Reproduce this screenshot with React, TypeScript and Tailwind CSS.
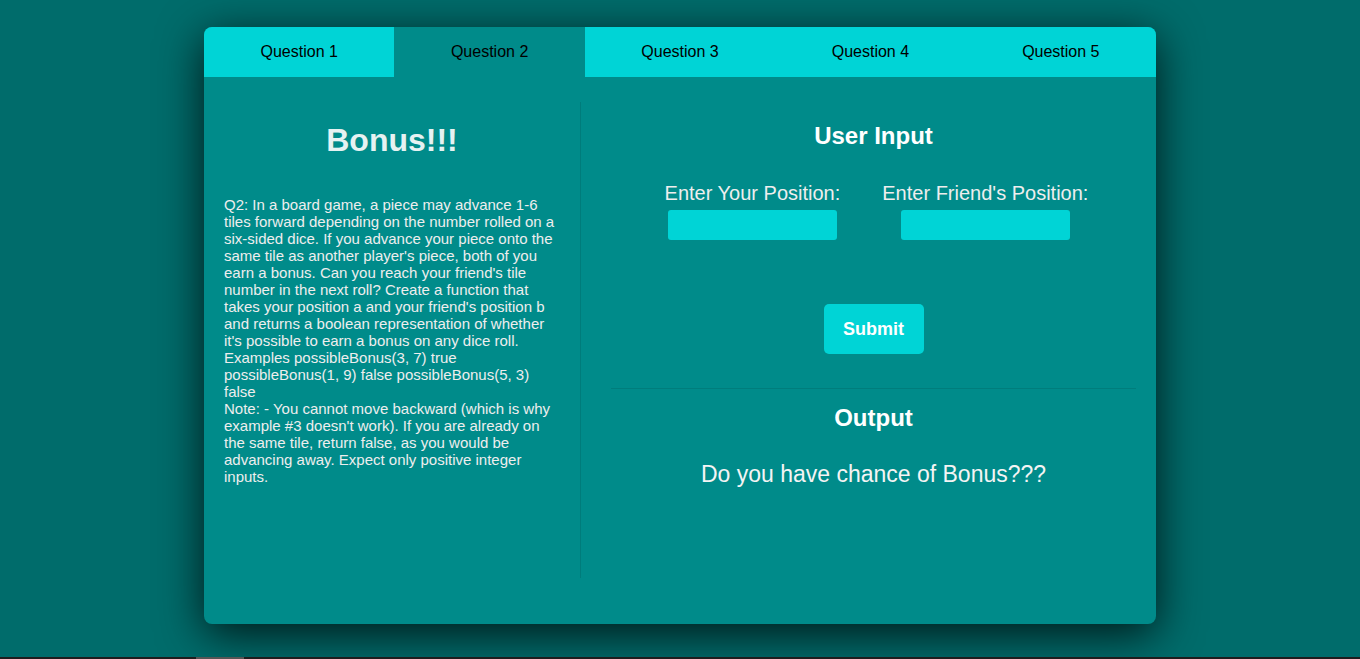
import React, { useState } from 'react';

const tabs = ['Question 1', 'Question 2', 'Question 3', 'Question 4', 'Question 5'];

export default function App() {
  const [active, setActive] = useState(1);
  const [a, setA] = useState('');
  const [b, setB] = useState('');

  return (
    <div className="font-['Liberation_Sans',Arial,sans-serif]">
      <div className="h-[657px] bg-[#006c6b] pt-[27px]">
        <div className="mx-auto w-[952px] h-[597px] bg-[#008b8a] rounded-lg overflow-hidden shadow-[0_10px_45px_rgba(0,0,0,0.8)]">
          {/* tabs */}
          <div className="flex h-[50px]">
            {tabs.map((t, i) => (
              <button
                key={t}
                onClick={() => setActive(i)}
                className={`flex-1 text-[16px] text-black ${i === active ? 'bg-[#008b8a]' : 'bg-[#00d4d6]'}`}
              >
                {t}
              </button>
            ))}
          </div>

          <div className="flex pt-[25px]">
            {/* question */}
            <div className="w-[377px] h-[476px] border-r border-[#007c7b] px-[20px] pt-[20px]">
              <h1 className="text-center text-[32px] font-bold text-[#e6f2f2] leading-[37px]">Bonus!!!</h1>
              <p className="mt-[37px] text-[15px] leading-[17px] text-[#eeeeee]">
                Q2: In a board game, a piece may advance 1-6 tiles forward depending on the number rolled on a
                six-sided dice. If you advance your piece onto the same tile as another player's piece, both of you
                earn a bonus. Can you reach your friend's tile number in the next roll? Create a function that takes
                your position a and your friend's position b and returns a boolean representation of whether it's
                possible to earn a bonus on any dice roll.
                <br />
                Examples possibleBonus(3, 7) true possibleBonus(1, 9) false possibleBonus(5, 3) false
                <br />
                Note: - You cannot move backward (which is why example #3 doesn't work). If you are already on the
                same tile, return false, as you would be advancing away. Expect only positive integer inputs.
              </p>
            </div>

            {/* user input + output */}
            <div className="flex-1 pl-[30px] pr-[20px] pt-[20px] text-center text-white">
              <h2 className="text-[24px] font-bold leading-[28px]">User Input</h2>
              <div className="mt-[32px] pl-[6px] flex justify-center gap-[42px]">
                <label className="flex flex-col items-center">
                  <span className="text-[20px] leading-[23px] text-[#eeeeee]">Enter Your Position:</span>
                  <input
                    value={a}
                    onChange={(e) => setA(e.target.value)}
                    className="mt-[5px] w-[169px] h-[30px] rounded-[3px] bg-[#00d4d6] px-2 text-black outline-none"
                  />
                </label>
                <label className="flex flex-col items-center">
                  <span className="text-[20px] leading-[23px] text-[#eeeeee]">Enter Friend's Position:</span>
                  <input
                    value={b}
                    onChange={(e) => setB(e.target.value)}
                    className="mt-[5px] w-[169px] h-[30px] rounded-[3px] bg-[#00d4d6] px-2 text-black outline-none"
                  />
                </label>
              </div>
              <button className="mt-[64px] w-[100px] h-[50px] rounded-[5px] bg-[#00d4d6] text-[18px] font-bold text-white">
                Submit
              </button>
              <div className="mt-[34px] border-t border-[#007d7c]" />
              <h2 className="mt-[15px] text-[24px] font-bold leading-[28px]">Output</h2>
              <p className="mt-[28px] text-[23px] leading-[28px] text-[#f4f4f4]">Do you have chance of Bonus???</p>
            </div>
          </div>
        </div>
      </div>
      <div className="h-[2px] bg-[#1d1d1d]">
        <div className="ml-[196px] w-[48px] h-full bg-[#555555]" />
      </div>
    </div>
  );
}
